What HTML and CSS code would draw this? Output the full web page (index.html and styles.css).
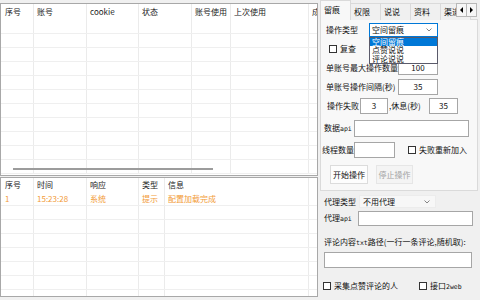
FILE: index.html
```html
<!DOCTYPE html>
<html>
<head>
<meta charset="utf-8">
<link rel="stylesheet" href="styles.css">
</head>
<body>
<div class="app">
  <div class="left">
    <div class="grid top-grid">
      <div class="grow ghead">
        <div class="cell t1 first">序号</div><div class="cell t2">账号</div><div class="cell t3">cookie</div><div class="cell t4">状态</div><div class="cell t5">账号使用</div><div class="cell t6">上次使用</div><div class="cell t7">成功</div>
      </div>
      <div class="grow"><div class="cell t1"></div><div class="cell t2"></div><div class="cell t3"></div><div class="cell t4"></div><div class="cell t5"></div><div class="cell t6"></div><div class="cell t7"></div></div>
      <div class="grow"><div class="cell t1"></div><div class="cell t2"></div><div class="cell t3"></div><div class="cell t4"></div><div class="cell t5"></div><div class="cell t6"></div><div class="cell t7"></div></div>
      <div class="grow"><div class="cell t1"></div><div class="cell t2"></div><div class="cell t3"></div><div class="cell t4"></div><div class="cell t5"></div><div class="cell t6"></div><div class="cell t7"></div></div>
      <div class="grow"><div class="cell t1"></div><div class="cell t2"></div><div class="cell t3"></div><div class="cell t4"></div><div class="cell t5"></div><div class="cell t6"></div><div class="cell t7"></div></div>
      <div class="grow"><div class="cell t1"></div><div class="cell t2"></div><div class="cell t3"></div><div class="cell t4"></div><div class="cell t5"></div><div class="cell t6"></div><div class="cell t7"></div></div>
      <div class="grow"><div class="cell t1"></div><div class="cell t2"></div><div class="cell t3"></div><div class="cell t4"></div><div class="cell t5"></div><div class="cell t6"></div><div class="cell t7"></div></div>
      <div class="grow"><div class="cell t1"></div><div class="cell t2"></div><div class="cell t3"></div><div class="cell t4"></div><div class="cell t5"></div><div class="cell t6"></div><div class="cell t7"></div></div>
      <div class="grow"><div class="cell t1"></div><div class="cell t2"></div><div class="cell t3"></div><div class="cell t4"></div><div class="cell t5"></div><div class="cell t6"></div><div class="cell t7"></div></div>
      <div class="grow"><div class="cell t1"></div><div class="cell t2"></div><div class="cell t3"></div><div class="cell t4"></div><div class="cell t5"></div><div class="cell t6"></div><div class="cell t7"></div></div>
      <div class="grow"><div class="cell t1"></div><div class="cell t2"></div><div class="cell t3"></div><div class="cell t4"></div><div class="cell t5"></div><div class="cell t6"></div><div class="cell t7"></div></div>
      <div class="grow"><div class="cell t1"></div><div class="cell t2"></div><div class="cell t3"></div><div class="cell t4"></div><div class="cell t5"></div><div class="cell t6"></div><div class="cell t7"></div></div>
      <div class="hscroll"></div>
    </div>
    <div class="grid bottom-grid">
      <div class="grow ghead bhead">
        <div class="cell b1 first">序号</div><div class="cell b2">时间</div><div class="cell b3">响应</div><div class="cell b4">类型</div><div class="cell b5">信息</div><div class="cell b6"></div>
      </div>
      <div class="grow log">
        <div class="cell b1 first">1</div><div class="cell b2">15:23:28</div><div class="cell b3">系统</div><div class="cell b4">提示</div><div class="cell b5">配置加载完成</div><div class="cell b6"></div>
      </div>
      <div class="grow"><div class="cell b1"></div><div class="cell b2"></div><div class="cell b3"></div><div class="cell b4"></div><div class="cell b5"></div><div class="cell b6"></div></div>
      <div class="grow"><div class="cell b1"></div><div class="cell b2"></div><div class="cell b3"></div><div class="cell b4"></div><div class="cell b5"></div><div class="cell b6"></div></div>
      <div class="grow"><div class="cell b1"></div><div class="cell b2"></div><div class="cell b3"></div><div class="cell b4"></div><div class="cell b5"></div><div class="cell b6"></div></div>
      <div class="grow"><div class="cell b1"></div><div class="cell b2"></div><div class="cell b3"></div><div class="cell b4"></div><div class="cell b5"></div><div class="cell b6"></div></div>
      <div class="grow"><div class="cell b1"></div><div class="cell b2"></div><div class="cell b3"></div><div class="cell b4"></div><div class="cell b5"></div><div class="cell b6"></div></div>
      <div class="grow"><div class="cell b1"></div><div class="cell b2"></div><div class="cell b3"></div><div class="cell b4"></div><div class="cell b5"></div><div class="cell b6"></div></div>
      <div class="grow"><div class="cell b1"></div><div class="cell b2"></div><div class="cell b3"></div><div class="cell b4"></div><div class="cell b5"></div><div class="cell b6"></div></div>
    </div>
  </div>

  <div class="right">
    <div class="tabs">
      <div class="tab sel">留痕</div>
      <div class="tab">权限</div>
      <div class="tab">说说</div>
      <div class="tab">资料</div>
      <div class="tab">渠道</div>
      <div class="arrows">
        <span class="arr"><svg width="5" height="6" viewBox="0 0 5 6"><polygon points="4,0 4,6 1,3" fill="#000"/></svg></span>
        <span class="arr"><svg width="5" height="6" viewBox="0 0 5 6"><polygon points="1,0 1,6 4,3" fill="#000"/></svg></span>
      </div>
    </div>

    <div class="tabpage">
      <div class="row ra">
        <div class="lbl w43">操作类型</div>
        <div class="combo focus">
          <span class="cval">空间留痕</span>
          <svg class="chev" width="6" height="4" viewBox="0 0 6 4"><polyline points="0.5,0.5 3,3 5.5,0.5" fill="none" stroke="#666" stroke-width="0.8"/></svg>
          <div class="droplist">
            <div class="ditem on">空间留痕</div>
            <div class="ditem">点赞说说</div>
            <div class="ditem">评论说说</div>
          </div>
        </div>
      </div>
      <div class="row rb">
        <span class="chk"></span><span class="ctext">复查</span>
      </div>
      <div class="row rc">
        <div class="lbl w72">单账号最大操作数量</div>
        <div class="tb w40 ctr">100</div>
      </div>
      <div class="row rd">
        <div class="lbl w72">单账号操作间隔(秒)</div>
        <div class="tb w40 ctr">35</div>
      </div>
      <div class="row re">
        <div class="lbl w33">操作失败</div>
        <div class="tb w28 ctr">3</div>
        <div class="lbl w40 ml1">,休息(秒)</div>
        <div class="tb w29 ctr">35</div>
      </div>
      <div class="row rf">
        <div class="lbl w30">数据<span class="lat">api</span></div>
        <div class="tb w115"></div>
      </div>
      <div class="row rg">
        <div class="lbl w32">线程数量</div>
        <div class="tb w41"></div>
        <span class="chk ml11"></span><span class="ctext">失败重新加入</span>
      </div>
      <div class="row rh">
        <div class="btn">开始操作</div>
        <div class="btn dis">停止操作</div>
      </div>
    </div>

    <div class="lower">
      <div class="row ri">
        <div class="lbl w35">代理类型</div>
        <div class="combo flat">
          <span class="cval">不用代理</span>
          <svg class="chev" width="6" height="4" viewBox="0 0 6 4"><polyline points="0.5,0.5 3,3 5.5,0.5" fill="none" stroke="#666" stroke-width="0.8"/></svg>
        </div>
      </div>
      <div class="row rj">
        <div class="lbl w34">代理<span class="lat">api</span></div>
        <div class="tb w115"></div>
      </div>
      <div class="row rk">
        <div class="lbl">评论内容<span class="lat">txt</span>路径(一行一条评论,随机取):</div>
      </div>
      <div class="row rl">
        <div class="tb w148"></div>
      </div>
      <div class="row rm">
        <div class="cgroup"><span class="chk"></span><span class="ctext">采集点赞评论的人</span></div>
        <div class="cgroup"><span class="chk"></span><span class="ctext">接口<span class="lat">2web</span></span></div>
      </div>
    </div>
  </div>
</div>
</body>
</html>
```

FILE: styles.css
```css
* { box-sizing: border-box; }
html, body { margin: 0; padding: 0; }
body {
  width: 480px;
  height: 300px;
  overflow: hidden;
  background: #f0f0f0;
  font-family: "Noto Sans CJK SC", "Noto Sans", sans-serif;
  font-size: 8px;
  line-height: 1;
  color: #111;
}
.app { display: flex; width: 480px; height: 300px; }

/* ---------- left grids ---------- */
.left {
  width: 318px;
  padding-top: 3px;
  display: flex;
  flex-direction: column;
  gap: 1px;
}
.grid {
  position: relative;
  width: 318px;
  background: #fff;
  border: 1px solid #a8a8a8;
  overflow: hidden;
}
.top-grid { height: 173px; }
.bottom-grid { height: 120px; }
.grow {
  display: flex;
  height: 14px;
  border-bottom: 1px solid #efefef;
  white-space: nowrap;
}
.ghead { height: 16px; border-bottom: none; color: #222; }
.bhead { height: 14px; }
.cell {
  flex: none;
  height: 100%;
  border-right: 1px solid #ebebeb;
  padding-left: 3px;
  display: flex;
  align-items: center;
  overflow: hidden;
}
.cell.first { padding-left: 4px; }
.t1 { width: 33px; } .t2 { width: 53px; } .t3 { width: 52px; } .t4 { width: 53px; }
.t5 { width: 39px; } .t6 { width: 78px; } .t7 { width: 60px; }
.b1 { width: 33px; } .b2 { width: 53px; } .b3 { width: 52px; } .b4 { width: 26px; }
.b5 { width: 144px; } .b6 { width: 60px; }
.log { color: #f29b38; }
.hscroll {
  position: absolute;
  left: 12px;
  top: 164px;
  width: 200px;
  height: 2px;
  background: #9c9c9c;
}

/* ---------- right panel ---------- */
.right { width: 162px; display: flex; flex-direction: column; }
.tabs {
  position: relative;
  height: 20px;
  display: flex;
  align-items: flex-end;
  padding-left: 2px;
  overflow: hidden;
}
.tab {
  flex: none;
  width: 31px;
  height: 17px;
  padding-left: 3px;
  display: flex;
  align-items: center;
  border: 1px solid #dadada;
  border-bottom: none;
  margin-right: -1px;
  background: #f0f0f0;
}
.tab.sel {
  height: 20px;
  padding-bottom: 1px;
  background: #f8f8f8;
  position: relative;
  z-index: 1;
}
.arrows {
  position: absolute;
  right: 3px;
  top: 3px;
  display: flex;
  z-index: 2;
}
.arr {
  width: 11px;
  height: 14px;
  border: 1px solid #b8b8b8;
  background: #f6f6f6;
  display: flex;
  align-items: center;
  justify-content: center;
  margin-left: -1px;
}
.tabpage {
  margin: -1px 2px 0 2px;
  height: 172px;
  border: 1px solid #dadada;
  background: #f8f8f8;
}
.row { display: flex; align-items: center; white-space: nowrap; }
.lbl { flex: none; }
.w30 { width: 30px; } .w32 { width: 32px; } .w33 { width: 33px; } .w34 { width: 34px; }
.w35 { width: 35px; } .w40 { width: 40px; } .w43 { width: 43px; } .w72 { width: 72px; }
.w28 { width: 28px; } .w29 { width: 29px; } .w41 { width: 41px; } .w115 { width: 115px; }
.w148 { width: 148px; }
.ml1 { margin-left: 1px; }
.ml11 { margin-left: 13px; }
.lat { font-size: 6.5px; font-family: "DejaVu Sans Mono", monospace; }

.tb {
  flex: none;
  height: 100%;
  background: #fff;
  border: 1px solid #a6a6a6;
  display: flex;
  align-items: center;
}
.tb.ctr { justify-content: center; }

.ra { margin-top: 3px; height: 14px; padding-left: 5px; position: relative; z-index: 3; }
.rb { margin-top: 8px; height: 8px; padding-left: 8px; }
.rc { margin-top: 7px; height: 15px; padding-left: 5px; }
.rd { margin-top: 4px; height: 16px; padding-left: 5px; }
.re { margin-top: 3px; height: 16px; padding-left: 6px; }
.rf { margin-top: 6px; height: 17px; padding-left: 3px; }
.rg { margin-top: 5px; height: 16px; padding-left: 1px; }
.rh { margin-top: 7px; height: 19px; padding-left: 9px; gap: 8px; }

.combo {
  position: relative;
  width: 69px;
  height: 100%;
  background: #fff;
  border: 1px solid #0078d7;
  display: flex;
  align-items: center;
  padding-left: 2px;
}
.combo.flat {
  width: 77px;
  border: 1px solid #ececec;
  background: #f7f7f7;
  padding-left: 3px;
}
.cval { flex: 1; }
.chev { position: absolute; right: 5px; top: 50%; margin-top: -2px; }
.droplist {
  position: absolute;
  left: -1px;
  top: 13px;
  width: 69px;
  border: 1px solid #5a5a6a;
  background: #fff;
}
.ditem { height: 8.4px; line-height: 8.4px; padding-left: 2px; }
.ditem.on { background: #0078d7; color: #fff; }

.chk {
  flex: none;
  width: 8px;
  height: 8px;
  border: 1px solid #333;
  background: #fff;
}
.ctext { margin-left: 3px; }

.btn {
  flex: none;
  width: 38px;
  height: 19px;
  display: flex;
  align-items: center;
  justify-content: center;
  background: #fdfdfd;
  border: 1px solid #dcdcdc;
}
.btn.dis { width: 37px; background: #f4f4f4; border-color: #e6e6e6; color: #a3a3a3; }

/* lower area */
.lower { flex: 1; }
.ri { margin-top: 4px; height: 13px; padding-left: 6px; }
.rj { margin-top: 3px; height: 15px; padding-left: 6px; }
.rk { margin-top: 12px; height: 8px; padding-left: 6px; }
.rl { margin-top: 6px; height: 16px; padding-left: 6px; }
.rm { margin-top: 14px; height: 8px; padding-left: 5px; }
.cgroup { display: flex; align-items: center; }
.cgroup:first-child { width: 96px; }
```
